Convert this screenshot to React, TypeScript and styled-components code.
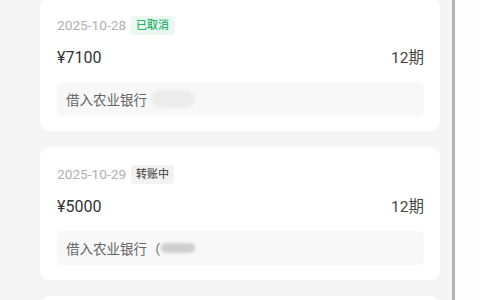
import styled, { createGlobalStyle } from "styled-components";

const GlobalStyle = createGlobalStyle`
  html, body {
    margin: 0;
    padding: 0;
    background: #fafafa;
    font-family: Roboto, "Noto Sans CJK SC", sans-serif;
  }
`;

type Status = "cancelled" | "transferring";

interface Loan {
  date: string;
  status: Status;
  amount: string;
  terms: string;
  bank: string;
  paren: boolean;
}

const loans: Loan[] = [
  { date: "2025-10-28", status: "cancelled", amount: "¥7100", terms: "12期", bank: "借入农业银行", paren: false },
  { date: "2025-10-29", status: "transferring", amount: "¥5000", terms: "12期", bank: "借入农业银行", paren: true },
  { date: "2025-10-30", status: "transferring", amount: "¥3000", terms: "12期", bank: "借入农业银行", paren: true },
];

const statusText: Record<Status, string> = {
  cancelled: "已取消",
  transferring: "转账中",
};

const App = () => {
  return (
    <>
      <GlobalStyle />
      <Screen>
        <List>
          {loans.map((loan) => (
            <Card key={loan.date}>
              <DateRow>
                <DateText>{loan.date}</DateText>
                <Tag status={loan.status}>{statusText[loan.status]}</Tag>
              </DateRow>
              <AmountRow>
                <Amount>{loan.amount}</Amount>
                <Terms>{loan.terms}</Terms>
              </AmountRow>
              <BankBox>
                <BankText>
                  {loan.bank}
                  {loan.paren ? "（" : " "}
                </BankText>
                <Blur wide={!loan.paren} />
              </BankBox>
            </Card>
          ))}
        </List>
        <Divider />
        <Side />
      </Screen>
    </>
  );
};

export default App;

const Screen = styled.div`
  display: flex;
  height: 300px;
  overflow: hidden;
`;

const List = styled.div`
  width: 452px;
  background: #f5f5f5;
  padding: 0 12px 0 40px;
  box-sizing: border-box;
  display: flex;
  flex-direction: column;
  gap: 16px;
  margin-top: -2px;
`;

const Divider = styled.div`
  width: 3px;
  background: #b4b4b4;
`;

const Side = styled.div`
  flex: 1;
  background: #fdfdfd;
`;

const Card = styled.div`
  background: #fff;
  border-radius: 9px;
  padding: 17px 16px 15px 17px;
  display: flex;
  flex-direction: column;
  flex-shrink: 0;
`;

const DateRow = styled.div`
  display: flex;
  align-items: center;
  gap: 5px;
  height: 20px;
`;

const DateText = styled.span`
  font-size: 13.7px;
  color: #b0b0b0;
`;

const Tag = styled.span<{ status: Status }>`
  font-size: 11px;
  line-height: 19px;
  padding: 0 5px;
  border-radius: 3px;
  font-weight: 500;
  color: ${(p) => (p.status === "cancelled" ? "#27b46a" : "#555")};
  background: ${(p) => (p.status === "cancelled" ? "#eaf8f0" : "#f2f2f2")};
`;

const AmountRow = styled.div`
  display: flex;
  justify-content: space-between;
  align-items: baseline;
  margin-top: 12px;
  height: 22px;
  line-height: 22px;
`;

const Amount = styled.span`
  font-size: 16px;
  color: #333;
`;

const Terms = styled.span`
  font-size: 15.5px;
  color: #444;
`;

const BankBox = styled.div`
  margin-top: 13px;
  height: 34px;
  background: #f8f8f8;
  border-radius: 6px;
  display: flex;
  align-items: center;
  padding: 0 9px;
`;

const BankText = styled.span`
  font-size: 13.5px;
  color: #666;
`;

const Blur = styled.span<{ wide: boolean }>`
  display: inline-block;
  width: ${(p) => (p.wide ? "44px" : "34px")};
  height: ${(p) => (p.wide ? "18px" : "10px")};
  border-radius: 9px;
  background: ${(p) => (p.wide ? "#ececec" : "#cfcfcf")};
  filter: blur(1.5px);
  margin-left: ${(p) => (p.wide ? "4px" : "0")};
`;
